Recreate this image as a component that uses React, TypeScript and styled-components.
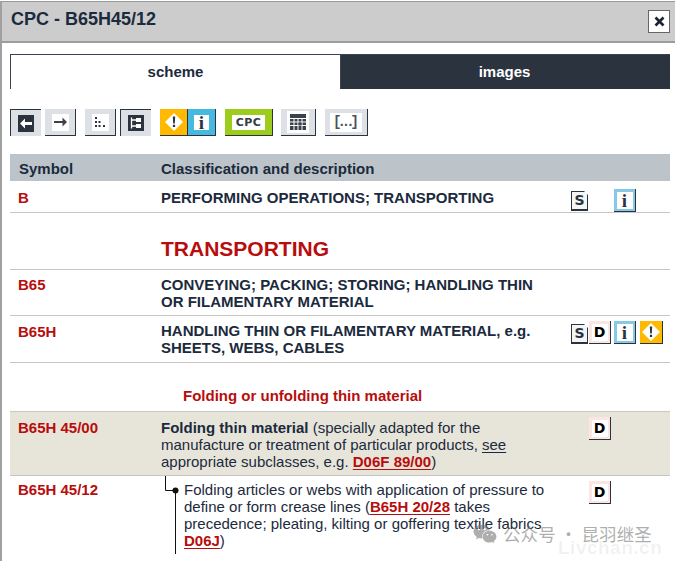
import React from "react";
import styled, { createGlobalStyle } from "styled-components";
import { FaWeixin } from "react-icons/fa";

const Global = createGlobalStyle`
  html, body { margin: 0; padding: 0; background: #fff; }
  body { font-family: "Liberation Sans", Arial, sans-serif; color: #1b2a3d; }
`;

const Page = styled.div`
  position: relative;
  width: 675px;
  height: 561px;
  overflow: hidden;
  padding-top: 1px;
  box-sizing: border-box;
`;
const Win = styled.div`
  height: 560px;
  border-left: 2px solid #a0a0a0;
  box-sizing: border-box;
`;
const Header = styled.header`
  height: 42px;
  box-sizing: border-box;
  background: #cccccc;
  border-top: 1px solid #999;
  border-bottom: 2px solid #9c9c9c;
  display: flex;
  align-items: flex-start;
  justify-content: space-between;
  padding: 7px 5px 0 9px;
`;
const Title = styled.h1`
  margin: 0;
  font-size: 18px;
  line-height: 20px;
  font-weight: 700;
  color: #1b2a3d;
`;
const Close = styled.button`
  width: 22px;
  height: 23px;
  margin-top: 1px;
  padding: 0;
  box-sizing: border-box;
  background: #fff;
  border: 1px solid #666;
  display: flex;
  align-items: center;
  justify-content: center;
`;
const Body = styled.div`
  padding: 11px 5px 0 8px;
`;
const Tabs = styled.div`
  display: grid;
  grid-template-columns: 330px 330px;
  height: 35px;
`;
const Tab = styled.div<{ $active?: boolean }>`
  box-sizing: border-box;
  display: flex;
  align-items: center;
  justify-content: center;
  padding-bottom: 1px;
  padding-right: ${(p) => (p.$active ? 0 : 2)}px;
  font-size: 15px;
  font-weight: 700;
  background: ${(p) => (p.$active ? "#fff" : "#2b333f")};
  color: ${(p) => (p.$active ? "#1b2a3d" : "#fff")};
  border-top: 1px solid #3a4350;
  border-left: 1px solid #3a4350;
`;
const Toolbar = styled.div`
  display: flex;
  margin-top: 20px;
  height: 27px;
`;
const ToolBtn = styled.div<{ $w: number; $bg?: string; $active?: boolean; $ml?: number }>`
  width: ${(p) => p.$w}px;
  height: 27px;
  margin-left: ${(p) => p.$ml ?? 0}px;
  box-sizing: border-box;
  background: ${(p) => p.$bg ?? "#dde0e5"};
  border-style: solid;
  border-color: #2b333f;
  border-width: ${(p) => (p.$active ? "1px 0 0 1px" : "0 1px 1px 0")};
  display: flex;
  align-items: center;
  justify-content: center;
  flex: none;
`;
const Inner = styled.div<{ $w: number; $h: number }>`
  width: ${(p) => p.$w}px;
  height: ${(p) => p.$h}px;
  background: #fff;
  display: flex;
  align-items: center;
  justify-content: center;
  line-height: 1;
`;
const CpcText = styled.span`
  font-family: "DejaVu Sans", sans-serif;
  font-weight: 700;
  font-size: 11px;
  letter-spacing: 0.4px;
  color: #333b46;
`;
const DotsText = styled.span`
  font-family: "Liberation Mono", monospace;
  font-weight: 700;
  font-size: 14px;
  letter-spacing: -4px;
  padding-right: 4px;
  color: #4a525d;
`;
const SerifI = styled.span`
  font-family: "Liberation Serif", serif;
  font-weight: 700;
  font-size: 19px;
  color: #2b333f;
`;
const TableHead = styled.div`
  display: grid;
  grid-template-columns: 151px 1fr;
  height: 27px;
  margin-top: 18px;
  align-items: center;
  background: #bdc4c9;
  font-size: 15px;
  font-weight: 700;
  color: #1b2a3d;
  padding-top: 2px;
  box-sizing: border-box;
`;
const HeadCell = styled.div<{ $pl?: number }>`
  padding-left: ${(p) => p.$pl ?? 0}px;
`;
const Row = styled.div<{ $h: number; $tint?: boolean; $noLine?: boolean }>`
  display: grid;
  grid-template-columns: 151px 410px 99px;
  height: ${(p) => p.$h}px;
  box-sizing: border-box;
  background: ${(p) => (p.$tint ? "#e7e5da" : "#fff")};
  border-bottom: ${(p) => (p.$noLine ? "0" : "1px solid #c6c6c6")};
  font-size: 15px;
  line-height: 17px;
`;
const Symbol = styled.div<{ $pt?: number }>`
  padding: ${(p) => p.$pt ?? 7}px 0 0 8px;
  color: #b80d0d;
  font-weight: 700;
`;
const Desc = styled.div<{ $bold?: boolean; $pt?: number }>`
  padding-top: ${(p) => p.$pt ?? 7}px;
  font-weight: ${(p) => (p.$bold ? 700 : 400)};
  color: #1b2a3d;
`;
const Section = styled.div<{ $h: number; $pl: number; $pt: number; $size: number }>`
  height: ${(p) => p.$h}px;
  box-sizing: border-box;
  padding: ${(p) => p.$pt}px 0 0 ${(p) => p.$pl}px;
  border-bottom: 1px solid #c6c6c6;
  font-size: ${(p) => p.$size}px;
  font-weight: 700;
  color: #b80d0d;
`;
const IconGrid = styled.div`
  display: grid;
  grid-template-columns: 18px 25px 26px 23px;
  align-items: start;
  height: 24px;
`;
const Slot = styled.div<{ $col: number; $top: number }>`
  grid-column: ${(p) => p.$col};
  grid-row: 1;
  margin-top: ${(p) => p.$top}px;
`;
const Mini = styled.div<{ $bg: string; $w?: number }>`
  width: ${(p) => p.$w ?? 22}px;
  height: 23px;
  box-sizing: border-box;
  background: ${(p) => p.$bg};
  border-right: 1px solid #2b333f;
  border-bottom: 1px solid #2b333f;
  display: flex;
  align-items: center;
  justify-content: center;
`;
const DLetter = styled.span`
  font-family: "DejaVu Sans", sans-serif;
  font-weight: 700;
  font-size: 14px;
  color: #000;
`;
const SLetter = styled.span`
  font-family: "DejaVu Sans", sans-serif;
  font-weight: 700;
  font-size: 14px;
  color: #2b333f;
`;
const DocIcon = styled.div`
  position: relative;
  width: 17px;
  height: 20px;
  box-sizing: border-box;
  background: #f4f5f6;
  border: 1px solid #2b333f;
  border-width: 1px 1px 2px 1px;
  display: flex;
  align-items: center;
  justify-content: center;
  &::after {
    content: "";
    position: absolute;
    top: -1px;
    right: -1px;
    width: 0;
    height: 0;
    border-top: 4px solid #fff;
    border-left: 4px solid transparent;
  }
`;
const RedLink = styled.a`
  color: #b80d0d;
  font-weight: 700;
  text-decoration: underline;
  text-underline-offset: 2px;
`;
const Plain = styled.a`
  color: #1b2a3d;
  text-decoration: underline;
  text-underline-offset: 2px;
`;
const Strong = styled.b`
  font-weight: 700;
`;
const TreeWrap = styled.div`
  display: flex;
`;
const TreeText = styled.div`
  padding-top: 5px;
`;
const Tree = styled.svg`
  flex: none;
  display: block;
`;
const Mark = styled.div`
  position: absolute;
  left: 473px;
  top: 521px;
  display: flex;
  align-items: center;
  gap: 6px;
  color: rgba(120, 120, 120, 0.6);
  font-family: "Noto Sans CJK SC", sans-serif;
  font-size: 17.5px;
  letter-spacing: 0.1px;
  white-space: nowrap;
`;
const MarkLatin = styled.div`
  position: absolute;
  left: 558px;
  top: 537px;
  font-size: 19px;
  font-weight: 700;
  letter-spacing: 0.5px;
  color: rgba(150, 150, 150, 0.13);
`;

const InfoMini = () => (
  <Mini $bg="#86c8e6">
    <Inner $w={16} $h={17}><SerifI>i</SerifI></Inner>
  </Mini>
);
const Diamond = () => (
  <svg width="18" height="18" viewBox="0 0 18 18">
    <path d="M9 0 18 9 9 18 0 9Z" fill="#fff" />
    <path d="M7.8 3.5h2.4l-.4 7H8.2zM7.9 11.8h2.2V14H7.9z" fill="#2b333f" />
  </svg>
);
const WarnMini = () => (
  <Mini $bg="#ffb900" $w={23}><Diamond /></Mini>
);
const DMini = () => (
  <Mini $bg="#fbe6e4">
    <Inner $w={16} $h={17}><DLetter>D</DLetter></Inner>
  </Mini>
);
const SDoc = () => (
  <DocIcon><SLetter>S</SLetter></DocIcon>
);

export default function App() {
  return (
    <Page>
      <Global />
      <Win>
        <Header>
          <Title>CPC - B65H45/12</Title>
          <Close aria-label="close">
            <svg width="11" height="11" viewBox="0 0 11 11">
              <path d="M1.5 1.5 9.5 9.5M9.5 1.5 1.5 9.5" stroke="#1b2430" strokeWidth="2.6" />
            </svg>
          </Close>
        </Header>
        <Body>
          <Tabs>
            <Tab $active>scheme</Tab>
            <Tab>images</Tab>
          </Tabs>
          <Toolbar>
            <ToolBtn $w={31} $active>
              <svg width="16" height="17" viewBox="0 0 16 17">
                <rect width="16" height="17" fill="#2b333f" />
                <path d="M2 8.500 7 3.500v3.500h7v3H7v3.500z" fill="#fff" />
              </svg>
            </ToolBtn>
            <ToolBtn $w={31} $ml={4}>
              <Inner $w={17} $h={17}>
                <svg width="13" height="10" viewBox="0 0 13 10">
                  <path d="M13 5 8.500.5V4H0v2h8.500v3.500z" fill="#3a424d" />
                </svg>
              </Inner>
            </ToolBtn>
            <ToolBtn $w={31} $ml={9}>
              <Inner $w={17} $h={17}>
                <svg width="11" height="11" viewBox="0 0 11 11" fill="#2b333f">
                  <rect x="0" y="0" width="2" height="2" />
                  <rect x="0" y="4" width="2" height="2" />
                  <rect x="3.500" y="4" width="2" height="2" />
                  <rect x="0" y="8" width="2" height="2" />
                  <rect x="3.500" y="8" width="2" height="2" />
                  <rect x="8" y="8" width="2" height="2" />
                </svg>
              </Inner>
            </ToolBtn>
            <ToolBtn $w={31} $ml={4} $active>
              <svg width="16" height="16" viewBox="0 0 16 16">
                <rect width="16" height="16" fill="#2b333f" />
                <path d="M3.500 2.500v11M3.500 5H9M3.500 11H9" stroke="#fff" strokeWidth="1.300" fill="none" />
                <rect x="8" y="3" width="5" height="4" fill="#fff" />
                <rect x="8" y="9" width="5" height="4" fill="#fff" />
              </svg>
            </ToolBtn>
            <ToolBtn $w={28} $ml={9} $bg="#ffb900">
              <Diamond />
            </ToolBtn>
            <ToolBtn $w={28} $bg="#45b9e0">
              <Inner $w={15} $h={15}><SerifI>i</SerifI></Inner>
            </ToolBtn>
            <ToolBtn $w={48} $ml={9} $bg="#9ccc1c">
              <Inner $w={33} $h={15}><CpcText>CPC</CpcText></Inner>
            </ToolBtn>
            <ToolBtn $w={35} $ml={8}>
              <Inner $w={22} $h={22}>
                <svg width="16" height="16" viewBox="0 0 16 16">
                  <rect width="16" height="16" fill="#3a424d" />
                  <path d="M0 4.500h16M0 8h16M0 11.500h16M4 4v12M8 4v12M12 4v12" stroke="#fff" strokeWidth="1" />
                  <rect x="8.500" y="8.500" width="3" height="3" fill="#3a424d" />
                </svg>
              </Inner>
            </ToolBtn>
            <ToolBtn $w={43} $ml={9}>
              <Inner $w={32} $h={19}><DotsText>[...]</DotsText></Inner>
            </ToolBtn>
          </Toolbar>
          <TableHead>
            <HeadCell $pl={9}>Symbol</HeadCell>
            <HeadCell>Classification and description</HeadCell>
          </TableHead>
          <Row $h={32}>
            <Symbol $pt={8}>B</Symbol>
            <Desc $bold $pt={8}>PERFORMING OPERATIONS; TRANSPORTING</Desc>
            <IconGrid>
              <Slot $col={1} $top={10}><SDoc /></Slot>
              <Slot $col={3} $top={8}><InfoMini /></Slot>
            </IconGrid>
          </Row>
          <Section $h={57} $pl={151} $pt={24} $size={21}>TRANSPORTING</Section>
          <Row $h={46}>
            <Symbol $pt={6}>B65</Symbol>
            <Desc $bold $pt={6}>CONVEYING; PACKING; STORING; HANDLING THIN<br />OR FILAMENTARY MATERIAL</Desc>
            <div />
          </Row>
          <Row $h={47}>
            <Symbol>B65H</Symbol>
            <Desc $bold $pt={6}>HANDLING THIN OR FILAMENTARY MATERIAL, e.g.<br />SHEETS, WEBS, CABLES</Desc>
            <IconGrid>
              <Slot $col={1} $top={8}><SDoc /></Slot>
              <Slot $col={2} $top={5}><DMini /></Slot>
              <Slot $col={3} $top={5}><InfoMini /></Slot>
              <Slot $col={4} $top={5}><WarnMini /></Slot>
            </IconGrid>
          </Row>
          <Section $h={49} $pl={173} $pt={24} $size={15}>Folding or unfolding thin material</Section>
          <Row $h={64} $tint>
            <Symbol>B65H 45/00</Symbol>
            <Desc>
              <Strong>Folding thin material</Strong> (specially adapted for the<br />
              manufacture or treatment of particular products, <Plain>see</Plain><br />
              appropriate subclasses, e.g. <RedLink>D06F 89/00</RedLink>)
            </Desc>
            <IconGrid>
              <Slot $col={2} $top={5}><DMini /></Slot>
            </IconGrid>
          </Row>
          <Row $h={85} $noLine>
            <Symbol $pt={5}>B65H 45/12</Symbol>
            <TreeWrap>
              <Tree width="23" height="78" viewBox="0 0 23 78">
                <path d="M4.500 0V14.500H14" stroke="#111" strokeWidth="1" fill="none" />
                <path d="M14.500 14V78" stroke="#111" strokeWidth="1" fill="none" />
                <circle cx="14.500" cy="14.500" r="3" fill="#111" />
              </Tree>
              <TreeText>
                Folding articles or webs with application of pressure to<br />
                define or form crease lines (<RedLink>B65H 20/28</RedLink> takes<br />
                precedence; pleating, kilting or goffering textile fabrics<br />
                <RedLink>D06J</RedLink>)
              </TreeText>
            </TreeWrap>
            <IconGrid>
              <Slot $col={2} $top={5}><DMini /></Slot>
            </IconGrid>
          </Row>
        </Body>
      </Win>
      <Mark><FaWeixin size={24} /><span>公众号 · 昆羽继圣</span></Mark>
      <MarkLatin>Livchan.cn</MarkLatin>
    </Page>
  );
}
